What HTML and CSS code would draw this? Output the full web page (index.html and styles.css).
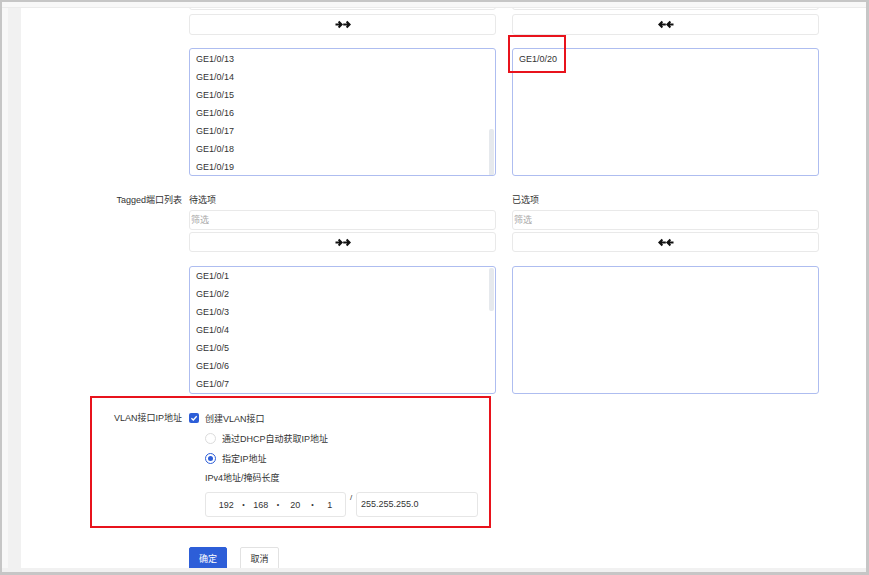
FILE: index.html
```html
<!DOCTYPE html>
<html lang="zh-CN">
<head>
<meta charset="utf-8">
<title>VLAN</title>
<link rel="stylesheet" href="styles.css">
</head>
<body>
<div class="frame">
  <div class="topbar"></div>
  <div class="main">
    <div class="gutter"></div>
    <div class="side"></div>
    <div class="content">
      <div class="form">
        <div class="row row-transfer row-first">
          <div class="label"></div>
          <div class="field transfer">
            <div class="pane">
              <div class="pane-title"></div>
              <div class="filter"></div>
              <div class="move"><svg width="16" height="9" viewBox="0 0 16 9"><path d="M0.5 4.5H6M3.6 1.5L6.6 4.5L3.6 7.5M8.2 4.5H14.6M11.6 1.5L14.6 4.5L11.6 7.5" fill="none" stroke="#111" stroke-width="2"/></svg></div>
              <div class="list list-scrolled">
                <div class="item">GE1/0/13</div>
                <div class="item">GE1/0/14</div>
                <div class="item">GE1/0/15</div>
                <div class="item">GE1/0/16</div>
                <div class="item">GE1/0/17</div>
                <div class="item">GE1/0/18</div>
                <div class="item">GE1/0/19</div>
                <div class="thumb thumb-bottom"></div>
              </div>
            </div>
            <div class="pane">
              <div class="pane-title"></div>
              <div class="filter"></div>
              <div class="move"><svg width="16" height="9" viewBox="0 0 16 9"><path d="M15.5 4.5H10M12.4 1.5L9.4 4.5L12.4 7.5M7.8 4.5H1.4M4.4 1.5L1.4 4.5L4.4 7.5" fill="none" stroke="#111" stroke-width="2"/></svg></div>
              <div class="list list-scrolled">
                <div class="item">GE1/0/20</div>
              </div>
            </div>
          </div>
        </div>

        <div class="row row-transfer">
          <div class="label">Tagged端口列表</div>
          <div class="field transfer">
            <div class="pane">
              <div class="pane-title">待选项</div>
              <div class="filter">筛选</div>
              <div class="move"><svg width="16" height="9" viewBox="0 0 16 9"><path d="M0.5 4.5H6M3.6 1.5L6.6 4.5L3.6 7.5M8.2 4.5H14.6M11.6 1.5L14.6 4.5L11.6 7.5" fill="none" stroke="#111" stroke-width="2"/></svg></div>
              <div class="list">
                <div class="item">GE1/0/1</div>
                <div class="item">GE1/0/2</div>
                <div class="item">GE1/0/3</div>
                <div class="item">GE1/0/4</div>
                <div class="item">GE1/0/5</div>
                <div class="item">GE1/0/6</div>
                <div class="item">GE1/0/7</div>
                <div class="thumb thumb-top"></div>
              </div>
            </div>
            <div class="pane">
              <div class="pane-title">已选项</div>
              <div class="filter">筛选</div>
              <div class="move"><svg width="16" height="9" viewBox="0 0 16 9"><path d="M15.5 4.5H10M12.4 1.5L9.4 4.5L12.4 7.5M7.8 4.5H1.4M4.4 1.5L1.4 4.5L4.4 7.5" fill="none" stroke="#111" stroke-width="2"/></svg></div>
              <div class="list"></div>
            </div>
          </div>
        </div>

        <div class="row row-vlan">
          <div class="label label-line">VLAN接口IP地址</div>
          <div class="field">
            <div class="line">
              <span class="checkbox"><svg width="8" height="8" viewBox="0 0 8 8"><path d="M1.4 4.2L3.3 6L6.7 2.2" fill="none" stroke="#fff" stroke-width="1.3"/></svg></span>
              <span>创建VLAN接口</span>
            </div>
            <div class="sub">
              <div class="line">
                <span class="radio"></span>
                <span>通过DHCP自动获取IP地址</span>
              </div>
              <div class="line">
                <span class="radio radio-on"></span>
                <span>指定IP地址</span>
              </div>
              <div class="line line-title">IPv4地址/掩码长度</div>
              <div class="ip-row">
                <div class="ip-box">
                  <span class="seg">192</span><span class="dot">•</span>
                  <span class="seg">168</span><span class="dot">•</span>
                  <span class="seg">20</span><span class="dot">•</span>
                  <span class="seg">1</span>
                </div>
                <span class="slash">/</span>
                <div class="mask-box">255.255.255.0</div>
              </div>
            </div>
          </div>
        </div>

        <div class="row row-actions">
          <div class="label"></div>
          <div class="field actions">
            <div class="btn btn-primary">确定</div>
            <div class="btn">取消</div>
          </div>
        </div>
      </div>
    </div>
  </div>
  <div class="bottombar"></div>
</div>
<div class="mark mark-port"></div>
<div class="mark mark-vlan"></div>
</body>
</html>
```

FILE: styles.css
```css
* { box-sizing: border-box; }
html, body { margin: 0; padding: 0; }
body {
  position: relative;
  width: 869px;
  height: 575px;
  overflow: hidden;
  background: #fff;
  font-family: "Liberation Sans", "Noto Sans CJK SC", sans-serif;
  font-size: 9px;
  color: #333;
}
.frame {
  width: 869px;
  height: 575px;
  border-top: 2px solid #c6c6c6;
  border-left: 2px solid #c6c6c6;
  border-right: 3px solid #c6c6c6;
  border-bottom: 3px solid #c6c6c6;
  display: flex;
  flex-direction: column;
  overflow: hidden;
}
.topbar {
  height: 6px;
  flex: none;
  background: #f8f8f8;
  border-bottom: 1px solid #ebebeb;
}
.main {
  flex: 1;
  display: flex;
  min-height: 0;
}
.gutter { width: 6px; flex: none; background: #f8f8f8; }
.side { width: 13px; flex: none; background: #f1f1f1; }
.content {
  flex: 1;
  background: #fff;
  overflow: hidden;
}
.bottombar {
  height: 4px;
  flex: none;
  background: #f1f1f1;
}
.form {
  margin-top: -32px;
  display: flex;
  flex-direction: column;
}
.row {
  display: flex;
  align-items: flex-start;
}
.row-transfer + .row-transfer { margin-top: 18px; }
.row-first .filter { margin-bottom: 4px; height: 18px; }
.row-first .move { height: 21px; margin-bottom: 13px; }
.row-vlan { margin-top: 14px; }
.row-actions { margin-top: 30px; }
.label {
  width: 161px;
  flex: none;
  margin-right: 7px;
  text-align: right;
  line-height: 12px;
  white-space: nowrap;
}
.label-line { line-height: 20px; }
.field { flex: none; }
.transfer {
  display: flex;
  gap: 16px;
}
.pane {
  width: 307px;
  display: flex;
  flex-direction: column;
}
.pane-title {
  line-height: 12px;
  height: 12px;
  margin-bottom: 4px;
}
.filter {
  height: 20px;
  border: 1px solid #e9e9e9;
  border-radius: 3px;
  color: #a8a8a8;
  line-height: 18px;
  padding-left: 1px;
  margin-bottom: 2px;
}
.move {
  height: 20px;
  border: 1px solid #e9e9e9;
  border-radius: 3px;
  display: flex;
  align-items: center;
  justify-content: center;
  margin-bottom: 14px;
}
.move svg { display: block; }
.list {
  position: relative;
  height: 128px;
  border: 1px solid #aebdf0;
  border-radius: 3px;
  padding-top: 0;
  overflow: hidden;
}
.list-scrolled { padding-top: 1px; }
.item {
  height: 18px;
  line-height: 18px;
  padding-left: 6px;
  color: #333;
}
.thumb {
  position: absolute;
  right: 1px;
  width: 5px;
  border-radius: 2px;
  background: #e6e9ed;
}
.thumb-bottom { top: 80px; height: 47px; }
.thumb-top { top: 1px; height: 43px; }

.line {
  height: 20px;
  display: flex;
  align-items: center;
  gap: 6px;
  white-space: nowrap;
}
.checkbox {
  width: 10px;
  height: 10px;
  border-radius: 2px;
  background: #2d5ed8;
  display: flex;
  align-items: center;
  justify-content: center;
}
.checkbox svg { display: block; }
.sub { padding-left: 16px; }
.radio {
  width: 11px;
  height: 11px;
  border-radius: 50%;
  border: 1px solid #dcdcdc;
  background: #fff;
  position: relative;
}
.radio-on { border-color: #2d5ed8; }
.radio-on::after {
  content: "";
  position: absolute;
  left: 2px;
  top: 2px;
  width: 5px;
  height: 5px;
  border-radius: 50%;
  background: #2d5ed8;
}
.line-title { height: 18px; }
.ip-row {
  margin-top: 6px;
  display: flex;
  align-items: flex-start;
}
.ip-box {
  width: 141px;
  height: 25px;
  border: 1px solid #e6e6e6;
  border-radius: 3px;
  display: flex;
  align-items: center;
  padding-left: 5px;
  padding-right: 0;
}
.seg {
  flex: 1;
  text-align: center;
}
.dot {
  width: 4px;
  text-align: center;
  font-size: 7px;
}
.slash {
  width: 10px;
  text-align: center;
  font-size: 8px;
  line-height: 10px;
  margin-top: 1px;
}
.mask-box {
  width: 122px;
  height: 25px;
  border: 1px solid #e6e6e6;
  border-radius: 3px;
  line-height: 23px;
  padding-left: 4px;
}
.actions {
  display: flex;
  gap: 13px;
}
.btn {
  height: 24px;
  width: 39px;
  line-height: 22px;
  text-align: center;
  border: 1px solid #e2e2e2;
  border-radius: 2px;
  background: #fff;
  color: #333;
}
.btn-primary {
  width: 38px;
  background: #2d5ed8;
  border-color: #2d5ed8;
  color: #fff;
}
.mark {
  position: absolute;
  border: 2px solid #e8131c;
}
.mark-port { left: 508px; top: 35px; width: 58px; height: 38px; }
.mark-vlan { left: 90px; top: 396px; width: 401px; height: 132px; }
```
